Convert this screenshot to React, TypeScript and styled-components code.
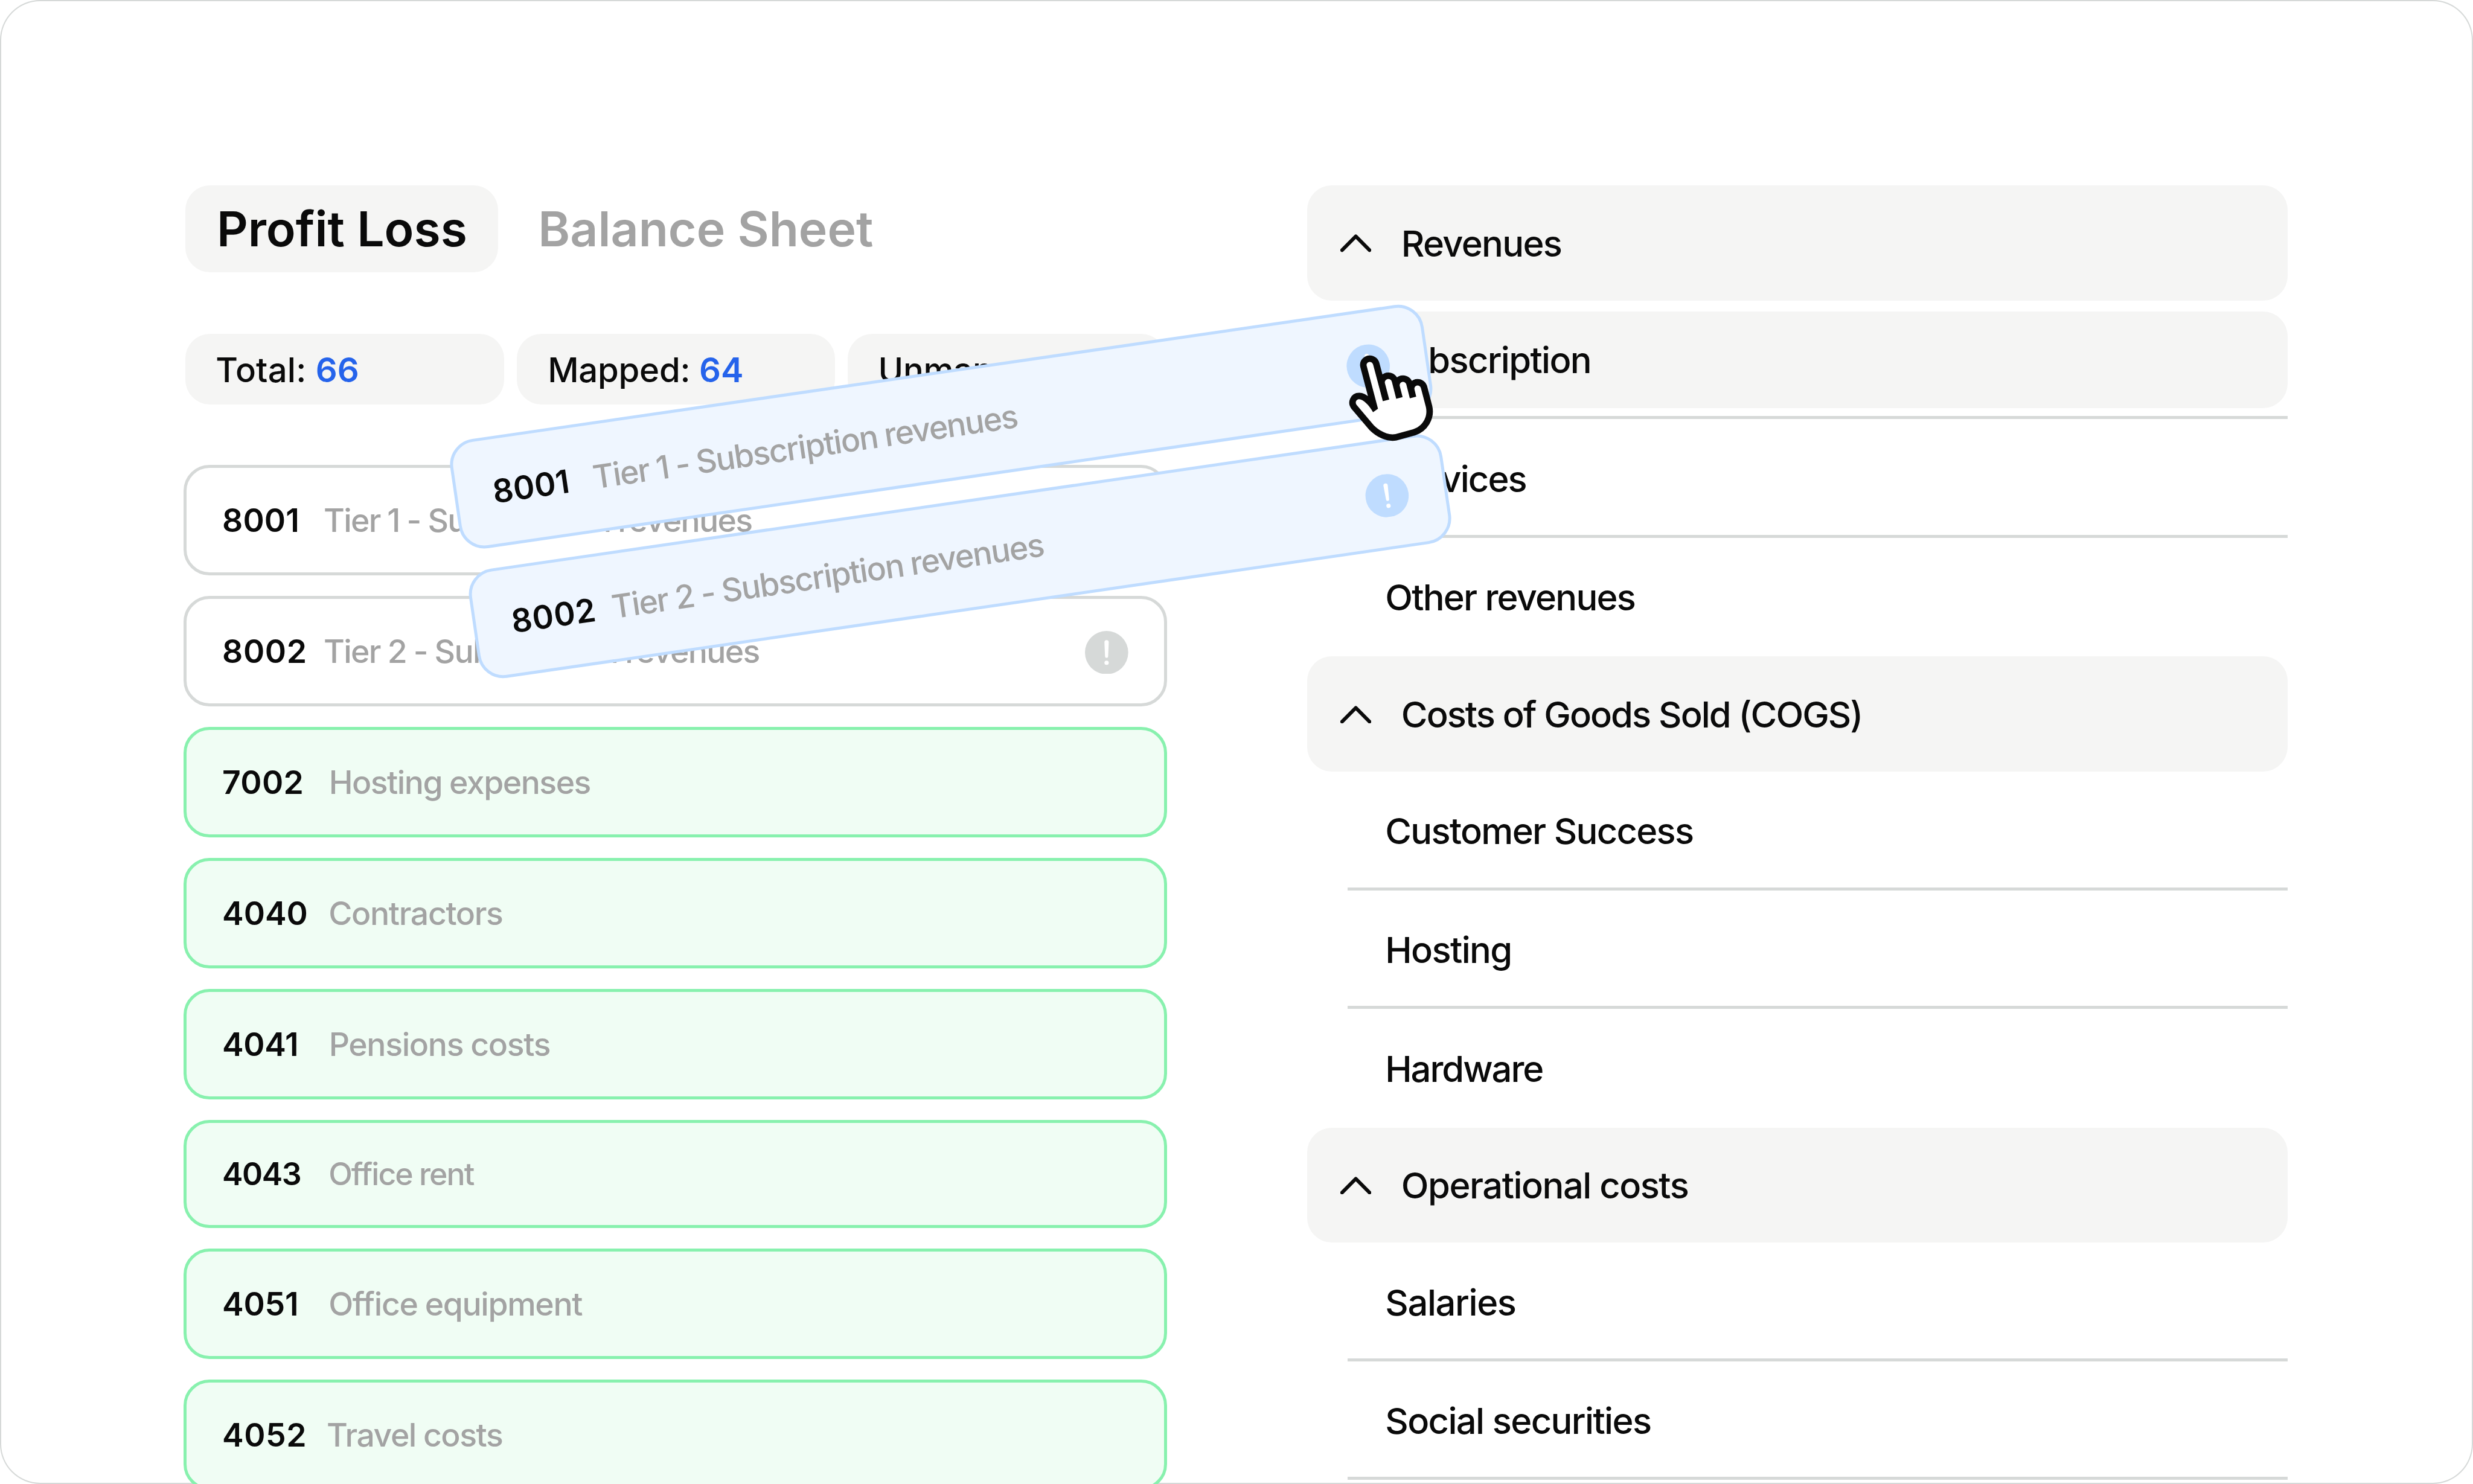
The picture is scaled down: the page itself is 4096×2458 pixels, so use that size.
import React from "react";
import styled, { createGlobalStyle, css } from "styled-components";

/* Design units are 8000 wide; the page is drawn at 0.512 of that. */
const u = (n: number) => `${Math.round(n * 0.512 * 100) / 100}px`;

const color = {
  ink: "#0a0a0a",
  muted: "#a3a3a3",
  blue: "#2563eb",
  surface: "#f5f5f4",
  line: "#d6d9d8",
  greenBg: "#f0fdf4",
  green: "#88f1ae",
  dragBg: "#eff6ff",
  drag: "#bfdcff",
};

const GlobalStyle = createGlobalStyle`
  *, *::before, *::after { box-sizing: border-box; }
  html, body { margin: 0; padding: 0; background: #fff; }
  body { font-family: Inter, "Liberation Sans", sans-serif; color: ${color.ink}; }
`;

const Frame = styled.main`
  position: relative;
  display: flex;
  align-items: flex-start;
  gap: ${u(453)};
  width: 4096px;
  height: 2458px;
  padding: ${u(600)} ${u(600)} 0 ${u(594)};
  overflow: hidden;
  background: #fff;
  border-radius: ${u(130)};
  box-shadow: inset 0 0 0 2px ${color.line};
`;

const AccountsPanel = styled.section`
  flex: none;
  width: ${u(3182)};
`;

const Tabs = styled.nav`
  display: flex;
  padding-left: ${u(6)};
`;

const Tab = styled.button<{ $active?: boolean }>`
  height: ${u(280)};
  border: 0;
  border-radius: ${u(80)};
  font: 600 ${u(157)} / ${u(278)} Inter, "Liberation Sans", sans-serif;
  text-align: left;
  white-space: nowrap;
  ${(p) =>
    p.$active
      ? css`
          width: ${u(1011)};
          padding: 0 0 0 ${u(101)};
          background: ${color.surface};
          color: ${color.ink};
        `
      : css`
          padding: 0 0 0 ${u(130)};
          background: transparent;
          color: ${color.muted};
        `}
`;

const Stats = styled.div`
  display: flex;
  gap: ${u(41)};
  margin-top: ${u(200)};
  padding-left: ${u(6)};
`;

const Stat = styled.div<{ $inset: number; $spacing: number }>`
  display: flex;
  align-items: center;
  width: ${u(1030)};
  height: ${u(228)};
  padding: ${u(3)} 0 0 ${(p) => u(p.$inset)};
  border-radius: ${u(80)};
  background: ${color.surface};
  font-size: ${u(110)};
  font-weight: 500;
  letter-spacing: ${(p) => p.$spacing}em;
  white-space: pre;
`;

const StatValue = styled.span`
  color: ${color.blue};
  font-weight: 600;
  letter-spacing: 0;
`;

const CardList = styled.div`
  display: flex;
  flex-direction: column;
  gap: ${u(67)};
  margin-top: ${u(196)};
`;

type Tone = "plain" | "mapped" | "drag";

const tones = {
  plain: css`background: #fff; border-color: ${color.line};`,
  mapped: css`background: ${color.greenBg}; border-color: ${color.green};`,
  drag: css`background: ${color.dragBg}; border-color: ${color.drag};`,
};

const Card = styled.article<{ $tone: Tone; $compact?: boolean }>`
  display: flex;
  align-items: center;
  flex: none;
  width: 100%;
  height: ${(p) => u(p.$compact ? 348 : 357)};
  padding: 0 ${u(116)} 0 ${u(115)};
  border: 5px solid;
  border-radius: ${u(84)};
  font-size: ${(p) => u(p.$compact ? 101 : 104.5)};
  ${(p) => tones[p.$tone]}
`;

const Code = styled.span<{ $wide: number; $spacing: number }>`
  flex: none;
  width: ${(p) => u(p.$wide)};
  font-weight: 600;
  letter-spacing: ${(p) => p.$spacing}em;
  white-space: nowrap;
`;

const Name = styled.span<{ $spacing: number }>`
  flex: 1;
  color: ${color.muted};
  font-weight: 500;
  letter-spacing: ${(p) => p.$spacing}em;
  word-spacing: -0.015em;
  white-space: nowrap;
`;

const Badge = styled.svg<{ $tone: Tone }>`
  flex: none;
  width: ${u(140)};
  height: ${u(140)};
  margin-top: ${u(8)};
  color: ${(p) => (p.$tone === "drag" ? color.drag : color.line)};
`;

const DragStack = styled.div`
  position: absolute;
  left: ${u(1484.2)};
  top: ${u(1200)};
  display: flex;
  flex-direction: column;
  gap: ${u(67)};
  width: ${u(3182)};
  transform: rotate(-8.26deg);
`;

const Hand = styled.svg`
  position: absolute;
  left: ${u(4360)};
  top: ${u(1120)};
  width: ${u(320)};
  height: ${u(320)};
  overflow: visible;
`;

const CategoriesPanel = styled.section`
  flex: none;
  width: ${u(3171)};
`;

const Group = styled.div`
  height: ${u(1524)};
`;

const GroupHeader = styled.header<{ $spacing: number }>`
  display: flex;
  align-items: center;
  height: ${u(372)};
  padding: ${u(2)} 0 0 ${u(106)};
  border-radius: ${u(80)};
  background: ${color.surface};
  font-size: ${u(116.5)};
  font-weight: 500;
  letter-spacing: ${(p) => p.$spacing}em;
  white-space: nowrap;
`;

const Chevron = styled.svg`
  flex: none;
  width: ${u(100)};
  height: ${u(57)};
  margin-right: ${u(98)};
`;

const Row = styled.div<{ $spacing: number; $last?: boolean }>`
  display: flex;
  align-items: center;
  height: ${u(384)};
  margin-left: ${u(131)};
  box-shadow: ${(p) => (p.$last ? "none" : `inset 0 -5px 0 ${color.line}`)};
  font-size: ${u(116.5)};
  font-weight: 500;
  letter-spacing: ${(p) => p.$spacing}em;
  white-space: nowrap;
`;

const RowLabel = styled.div<{ $highlight?: boolean }>`
  display: flex;
  align-items: center;
  flex: 1;
  height: ${u(312)};
  padding: ${u(1)} 0 0 ${u(121)};
  border-radius: ${u(80)};
  background: ${(p) => (p.$highlight ? color.surface : "transparent")};
`;

type Account = {
  code: string;
  name: string;
  tone: Tone;
  codeWidth: number;
  codeSpacing: number;
  nameSpacing: number;
  alert?: boolean;
  compact?: boolean;
};

const pending: Account[] = [
  { code: "8001", name: "Tier 1 - Subscription revenues", tone: "plain", codeWidth: 328, codeSpacing: 0.003, nameSpacing: -0.032, alert: true },
  { code: "8002", name: "Tier 2 - Subscription revenues", tone: "plain", codeWidth: 328, codeSpacing: 0.012, nameSpacing: -0.031, alert: true },
];

const mapped: Account[] = [
  { code: "7002", name: "Hosting expenses", tone: "mapped", codeWidth: 345, codeSpacing: 0.006, nameSpacing: -0.028 },
  { code: "4040", name: "Contractors", tone: "mapped", codeWidth: 344, codeSpacing: 0, nameSpacing: -0.025 },
  { code: "4041", name: "Pensions costs", tone: "mapped", codeWidth: 345, codeSpacing: -0.006, nameSpacing: -0.025 },
  { code: "4043", name: "Office rent", tone: "mapped", codeWidth: 344, codeSpacing: -0.028, nameSpacing: -0.037, compact: true },
  { code: "4051", name: "Office equipment", tone: "mapped", codeWidth: 344, codeSpacing: -0.003, nameSpacing: -0.025 },
  { code: "4052", name: "Travel costs", tone: "mapped", codeWidth: 338, codeSpacing: 0.01, nameSpacing: -0.027 },
];

type Category = { label: string; spacing: number; highlight?: boolean };

const groups: { title: string; spacing: number; rows: Category[] }[] = [
  {
    title: "Revenues",
    spacing: -0.028,
    rows: [
      { label: "Subscription", spacing: -0.028, highlight: true },
      { label: "Services", spacing: -0.031 },
      { label: "Other revenues", spacing: -0.03 },
    ],
  },
  {
    title: "Costs of Goods Sold (COGS)",
    spacing: -0.033,
    rows: [
      { label: "Customer Success", spacing: -0.028 },
      { label: "Hosting", spacing: -0.027 },
      { label: "Hardware", spacing: -0.034 },
    ],
  },
  {
    title: "Operational costs",
    spacing: -0.025,
    rows: [
      { label: "Salaries", spacing: -0.023 },
      { label: "Social securities", spacing: -0.027 },
    ],
  },
];

function Alert({ tone }: { tone: Tone }) {
  return (
    <Badge $tone={tone} viewBox="30 30 140 140">
      <circle cx="100" cy="100" r="70" fill="currentColor" />
      <path d="M93 67a7 7 0 0 1 14 0l-2 45a5 5 0 0 1-10 0z" fill="#fff" />
      <circle cx="100" cy="133" r="7" fill="#fff" />
    </Badge>
  );
}

function AccountCard({ account, tone }: { account: Account; tone?: Tone }) {
  const t = tone ?? account.tone;
  return (
    <Card $tone={t} $compact={account.compact}>
      <Code $wide={account.codeWidth} $spacing={account.codeSpacing}>{account.code}</Code>
      <Name $spacing={account.nameSpacing}>{account.name}</Name>
      {account.alert && <Alert tone={t} />}
    </Card>
  );
}

export default function App() {
  return (
    <>
      <GlobalStyle />
      <Frame>
        <AccountsPanel>
          <Tabs>
            <Tab $active>Profit Loss</Tab>
            <Tab>Balance Sheet</Tab>
          </Tabs>
          <Stats>
            <Stat $inset={98} $spacing={0.003}>Total: <StatValue>66</StatValue></Stat>
            <Stat $inset={101} $spacing={-0.005}>Mapped: <StatValue>64</StatValue></Stat>
            <Stat $inset={99} $spacing={-0.005}>Unmapped: <StatValue>2</StatValue></Stat>
          </Stats>
          <CardList>
            {[...pending, ...mapped].map((a) => (
              <AccountCard key={a.code} account={a} />
            ))}
          </CardList>
        </AccountsPanel>

        <CategoriesPanel>
          {groups.map((g) => (
            <Group key={g.title}>
              <GroupHeader $spacing={g.spacing}>
                <Chevron viewBox="0 0 100 57">
                  <path d="M5.5 51.5 50 6.5l44.5 45" fill="none" stroke={color.ink} strokeWidth="11.5" strokeLinecap="round" strokeLinejoin="round" />
                </Chevron>
                {g.title}
              </GroupHeader>
              {g.rows.map((r, i) => (
                <Row key={r.label} $spacing={r.spacing} $last={i === 2}>
                  <RowLabel $highlight={r.highlight}>{r.label}</RowLabel>
                </Row>
              ))}
            </Group>
          ))}
        </CategoriesPanel>

        <DragStack>
          {pending.map((a) => (
            <AccountCard key={a.code} account={a} tone="drag" />
          ))}
        </DragStack>
        <Hand viewBox="0 0 960 960">
          <path
            d="M88 573C70 550 82 517 113 517C150 517 210 575 247 643L295 610L185 192C180 172 196 155 215 155C232 155 244 166 248 182L342 536L404 520L362 360C358 340 374 321 396 321C412 321 426 332 430 349L472 512L534 496L506 388C502 366 517 348 538 348C553 348 566 358 570 374L604 508L666 492L649 421C645 402 660 384 679 384C695 384 708 394 712 410L760 594C782 690 725 780 636 808L465 855C400 868 320 835 255 770Z"
            fill="#fff"
            stroke={color.ink}
            strokeWidth="126"
            strokeLinejoin="round"
            paintOrder="stroke"
          />
        </Hand>
      </Frame>
    </>
  );
}
